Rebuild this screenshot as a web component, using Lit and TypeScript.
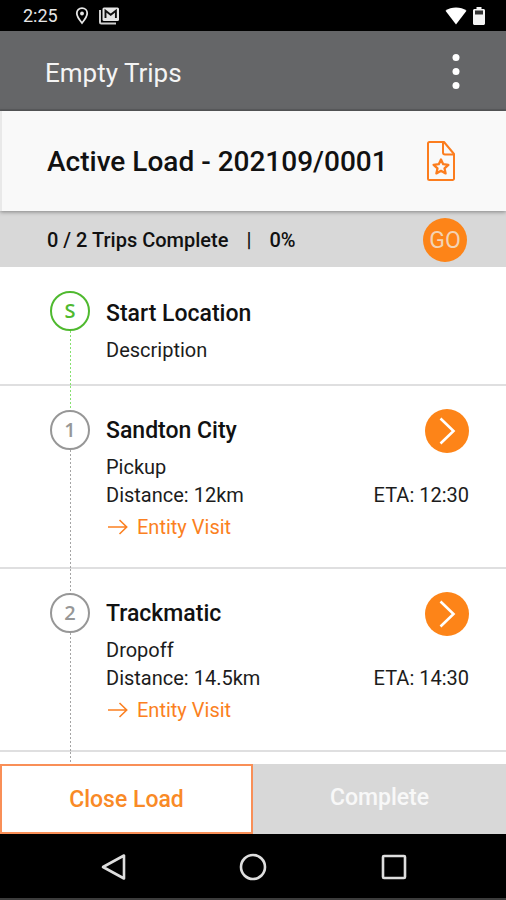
import { LitElement, html, css, svg, nothing } from "lit";
import { customElement, property } from "lit/decorators.js";
import { classMap } from "lit/directives/class-map.js";

interface Stop {
  marker: string;
  name: string;
  kind: string;
  distance?: string;
  eta?: string;
}

const stops: Stop[] = [
  { marker: "S", name: "Start Location", kind: "Description" },
  { marker: "1", name: "Sandton City", kind: "Pickup", distance: "12km", eta: "12:30" },
  { marker: "2", name: "Trackmatic", kind: "Dropoff", distance: "14.5km", eta: "14:30" },
];

const shared = css`
  * {
    box-sizing: border-box;
  }
  h1,
  h2,
  h3,
  p,
  ul {
    margin: 0;
    padding: 0;
  }
  h2,
  h3 {
    font-weight: 500;
  }
  button {
    font: inherit;
    color: inherit;
    background: none;
    border: 0;
    padding: 0;
    cursor: pointer;
  }
  svg {
    display: block;
  }
`;

@customElement("status-bar")
class StatusBar extends LitElement {
  static styles = [
    shared,
    css`
      :host {
        display: flex;
        align-items: center;
        justify-content: space-between;
        height: 31px;
        padding: 0 21px 0 23px;
        background: #000;
        color: #e6e6e6;
        font-size: 18px;
      }
      .left,
      .right {
        display: flex;
        align-items: center;
      }
      .left {
        gap: 16px;
      }
      .icons {
        display: flex;
        align-items: center;
        gap: 8px;
      }
      .right {
        gap: 6px;
      }
    `,
  ];

  render() {
    return html`
      <div class="left">
        <span>2:25</span>
        <span class="icons">
          <svg width="16" height="18" viewBox="0 0 16 18" fill="none">
            <path d="M8 1.2c-3.1 0-5.2 2.2-5.2 5.1C2.8 9.8 8 16 8 16s5.2-6.2 5.2-9.7C13.2 3.4 11.1 1.2 8 1.2z" stroke="#e6e6e6" stroke-width="1.8" />
            <circle cx="8" cy="6.5" r="1.9" fill="#e6e6e6" />
          </svg>
          <svg width="22" height="18" viewBox="0 0 22 18">
            <path d="M2 3v12.2c0 .8.5 1.3 1.300 1.300H18" fill="none" stroke="#d0d0d0" stroke-width="2" />
            <rect x="4.500" y="0.500" width="16.500" height="13.500" rx="1.500" fill="#e6e6e6" />
            <path d="M7.500 11V3.800l5.200 4 5.200-4V11" fill="none" stroke="#111" stroke-width="1.900" />
          </svg>
        </span>
      </div>
      <div class="right">
        <svg width="22" height="18" viewBox="0 0 22 18">
          <path d="M11 17.500.5 3.800C3.500 1.700 7 .6 11 .6s7.500 1.100 10.500 3.200z" fill="#fff" />
        </svg>
        <svg width="12" height="18" viewBox="0 0 12 18">
          <path d="M3.500 0h5v2h2c.8 0 1.500.7 1.500 1.500v13c0 .8-.7 1.500-1.500 1.500h-9C.7 18 0 17.300 0 16.500v-13C0 2.700.7 2 1.500 2h2z" fill="#f4f4f4" />
          <rect x="2" y="3.500" width="8" height="4" fill="#333" />
        </svg>
      </div>
    `;
  }
}

@customElement("stop-row")
class StopRow extends LitElement {
  @property({ attribute: false }) stop!: Stop;
  @property({ type: Boolean }) start = false;
  @property() lead: "none" | "green" | "grey" = "grey";

  static styles = [
    shared,
    css`
      :host {
        display: grid;
        grid-template-columns: 40px 1fr auto;
        column-gap: 16px;
        padding: 0 37px 0 50px;
        box-shadow: inset 0 -2px #dfdfe0;
        font-size: 20px;
        line-height: 28px;
        color: #1c1c1c;
      }
      .rail {
        display: flex;
        flex-direction: column;
        align-items: center;
      }
      .lead {
        height: 24px;
      }
      .tail {
        flex: 1;
      }
      .lead,
      .tail {
        width: 1px;
        background: repeating-linear-gradient(#a4a4a4 0 2px, transparent 2px 4px);
      }
      .lead.green,
      .tail.green {
        background: repeating-linear-gradient(#86e070 0 2px, transparent 2px 4px);
      }
      .lead.none {
        background: none;
      }
      .marker {
        display: grid;
        place-items: center;
        width: 40px;
        height: 40px;
        border: 2px solid #979797;
        border-radius: 50%;
        color: #979797;
        font-family: "Open Sans", sans-serif;
        font-size: 20px;
        font-weight: 600;
      }
      .marker.green {
        border-color: #4fb92f;
        color: #4fb92f;
      }
      .body {
        padding: 31px 0 28px;
      }
      .body.start {
        padding: 33px 0 22px;
      }
      .name {
        margin-bottom: 8px;
        font-size: 23px;
        color: #111;
      }
      .visit {
        display: inline-flex;
        align-items: center;
        gap: 8px;
        margin-top: 4px;
        color: #fb8021;
        text-decoration: none;
        vertical-align: top;
      }
      .side {
        display: flex;
        flex-direction: column;
        align-items: flex-end;
        gap: 28px;
        padding-top: 23px;
      }
      .open {
        display: grid;
        place-items: center;
        width: 44px;
        height: 44px;
        border-radius: 50%;
        background: #fd8418;
      }
    `,
  ];

  render() {
    const s = this.stop;
    return html`
      <div class="rail">
        <span class="lead ${this.lead}"></span>
        <span class=${classMap({ marker: true, green: this.start })}>${s.marker}</span>
        <span class=${classMap({ tail: true, green: this.start })}></span>
      </div>
      <div class=${classMap({ body: true, start: this.start })}>
        <h3 class="name">${s.name}</h3>
        <p>${s.kind}</p>
        ${s.distance
          ? html`<p>Distance: ${s.distance}</p>
              <a class="visit" href="#visit">
                <svg width="23" height="18" viewBox="0 0 23 18" fill="none" stroke="#fb8021" stroke-width="1.6">
                  <path d="M2 9h19M13.500 2l7.200 7-7.200 7" />
                </svg>
                <span>Entity Visit</span>
              </a>`
          : nothing}
      </div>
      ${s.eta
        ? html`<div class="side">
            <button class="open" aria-label="Open ${s.name}">
              <svg width="44" height="44" viewBox="0 0 44 44" fill="none" stroke="#fff" stroke-width="2.6">
                <path d="M15.500 9.500 28.500 22l-13 12.500" />
              </svg>
            </button>
            <span>ETA: ${s.eta}</span>
          </div>`
        : nothing}
    `;
  }
}

@customElement("app-root")
class AppRoot extends LitElement {
  static styles = [
    shared,
    css`
      :host {
        display: flex;
        flex-direction: column;
        min-height: 100vh;
        background: #fff;
        font-family: Roboto, sans-serif;
      }
      .toolbar {
        display: flex;
        align-items: center;
        justify-content: space-between;
        height: 80px;
        padding: 6px 40px 0 45px;
        background: #656668;
        border-bottom: 2px solid #5a5b5d;
        color: #f4f4f4;
      }
      .toolbar h1 {
        font-size: 26px;
        font-weight: 400;
      }
      .load {
        display: flex;
        align-items: center;
        justify-content: space-between;
        height: 100px;
        padding: 0 50px 0 45px;
        background: #f9f9f9;
        border-left: 2px solid #e9e9e9;
        color: #111;
        box-shadow: 0 1px 4px rgba(0, 0, 0, 0.4);
        z-index: 1;
      }
      .load h2 {
        font-size: 28px;
      }
      .progress {
        display: flex;
        align-items: center;
        height: 56px;
        padding: 2px 39px 0 47px;
        background: #d8d8d8;
        color: #111;
        font-size: 20px;
        font-weight: 500;
      }
      .bar {
        margin: 0 18px;
      }
      .go {
        width: 44px;
        height: 44px;
        margin-left: auto;
        border-radius: 50%;
        background: #fd8418;
        color: #f3d3b4;
        font-size: 23px;
        font-weight: 400;
      }
      .stops {
        display: flex;
        flex-direction: column;
        flex: 1;
        list-style: none;
      }
      .rest {
        flex: 1;
        min-height: 12px;
        width: 1px;
        margin-left: 70px;
        background: repeating-linear-gradient(#a4a4a4 0 2px, transparent 2px 4px);
      }
      .actions {
        display: grid;
        grid-template-columns: 1fr 1fr;
        height: 70px;
        font-size: 23px;
        font-weight: 500;
      }
      .close {
        border: 2px solid #f98f57;
        background: #fff;
        color: #f98a26;
      }
      .complete {
        padding-bottom: 4px;
        background: #d8d8d8;
        color: #f8f8f8;
      }
      .nav {
        display: grid;
        grid-template-columns: repeat(3, 1fr);
        place-items: center;
        height: 66px;
        padding: 2px 43px 0;
        background: #000;
        border-bottom: 2px solid #3c3c3c;
      }
    `,
  ];

  private navButton(label: string, shape: unknown) {
    return html`<button aria-label=${label}>
      <svg width="28" height="28" viewBox="0 0 28 28" fill="none" stroke="#dedede" stroke-width="2.6" stroke-linejoin="round">${shape}</svg>
    </button>`;
  }

  render() {
    return html`
      <status-bar></status-bar>
      <header class="toolbar">
        <h1>Empty Trips</h1>
        <button aria-label="More options">
          <svg width="20" height="40" viewBox="0 0 20 40" fill="#fff">
            <circle cx="10" cy="4.500" r="3.500" />
            <circle cx="10" cy="18.500" r="3.500" />
            <circle cx="10" cy="32.500" r="3.500" />
          </svg>
        </button>
      </header>
      <section class="load">
        <h2>Active Load - 202109/0001</h2>
        <button aria-label="Load document">
          <svg width="30" height="40" viewBox="0 0 30 40" fill="none" stroke="#fc7d1e" stroke-width="2" stroke-linejoin="round">
            <path d="M3.500 1H18l10 12v24.500a1.500 1.500 0 0 1-1.500 1.500h-23A1.500 1.500 0 0 1 2 37.500v-35A1.500 1.500 0 0 1 3.500 1z" />
            <path d="M17 1.500V11.500a2 2 0 0 0 2 2H28" />
            <path d="M15 18.500l2.200 4.700 5.200.6-3.900 3.500 1.100 5.100-4.600-2.600-4.600 2.600 1.100-5.100-3.900-3.500 5.200-.6z" stroke-width="2.300" />
          </svg>
        </button>
      </section>
      <section class="progress">
        <span>0 / 2 Trips Complete</span>
        <span class="bar">|</span>
        <span>0%</span>
        <button class="go">GO</button>
      </section>
      <ul class="stops">
        ${stops.map(
          (stop, i) => html`<li>
            <stop-row .stop=${stop} ?start=${i === 0} lead=${i === 0 ? "none" : i === 1 ? "green" : "grey"}></stop-row>
          </li>`,
        )}
        <li class="rest" role="presentation"></li>
      </ul>
      <div class="actions">
        <button class="close">Close Load</button>
        <button class="complete">Complete</button>
      </div>
      <nav class="nav">
        ${this.navButton("Back", svg`<path d="M25 2.500v23L4 14z" />`)}
        ${this.navButton("Home", svg`<circle cx="14" cy="14" r="12" />`)}
        ${this.navButton("Recent apps", svg`<rect x="4" y="3" width="22" height="22" rx="1" />`)}
      </nav>
    `;
  }
}
